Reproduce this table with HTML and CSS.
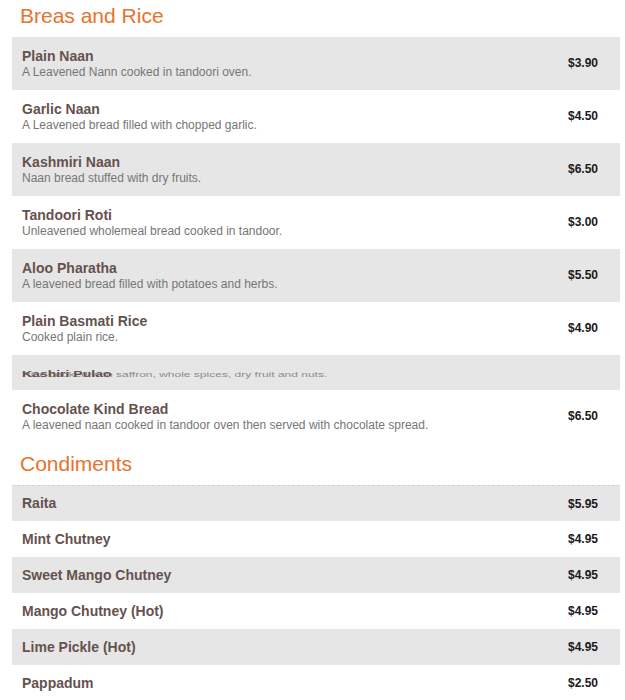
FILE: index.html
```html
<!DOCTYPE html>
<html>
<head>
<meta charset="utf-8">
<link rel="stylesheet" href="styles.css">
</head>
<body>
<div class="menu">
  <h2 class="heading first">Breas and Rice</h2>
  <div class="list">
    <div class="item alt">
      <div class="info"><div class="name">Plain Naan</div><div class="desc">A Leavened Nann cooked in tandoori oven.</div></div>
      <div class="price">$3.90</div>
    </div>
    <div class="item">
      <div class="info"><div class="name">Garlic Naan</div><div class="desc">A Leavened bread filled with chopped garlic.</div></div>
      <div class="price">$4.50</div>
    </div>
    <div class="item alt">
      <div class="info"><div class="name">Kashmiri Naan</div><div class="desc">Naan bread stuffed with dry fruits.</div></div>
      <div class="price">$6.50</div>
    </div>
    <div class="item">
      <div class="info"><div class="name">Tandoori Roti</div><div class="desc">Unleavened wholemeal bread cooked in tandoor.</div></div>
      <div class="price">$3.00</div>
    </div>
    <div class="item alt">
      <div class="info"><div class="name">Aloo Pharatha</div><div class="desc">A leavened bread filled with potatoes and herbs.</div></div>
      <div class="price">$5.50</div>
    </div>
    <div class="item">
      <div class="info"><div class="name">Plain Basmati Rice</div><div class="desc">Cooked plain rice.</div></div>
      <div class="price">$4.90</div>
    </div>
    <div class="item alt collapsing">
      <div class="stack"><div class="desc">Rice cooked with saffron, whole spices, dry fruit and nuts.</div><div class="name">Kashiri Pulao</div></div>
    </div>
    <div class="item">
      <div class="info"><div class="name">Chocolate Kind Bread</div><div class="desc">A leavened naan cooked in tandoor oven then served with chocolate spread.</div></div>
      <div class="price">$6.50</div>
    </div>
  </div>

  <h2 class="heading">Condiments</h2>
  <div class="list small">
    <div class="item alt dashed"><div class="info"><div class="name">Raita</div></div><div class="price">$5.95</div></div>
    <div class="item"><div class="info"><div class="name">Mint Chutney</div></div><div class="price">$4.95</div></div>
    <div class="item alt"><div class="info"><div class="name">Sweet Mango Chutney</div></div><div class="price">$4.95</div></div>
    <div class="item"><div class="info"><div class="name">Mango Chutney (Hot)</div></div><div class="price">$4.95</div></div>
    <div class="item alt"><div class="info"><div class="name">Lime Pickle (Hot)</div></div><div class="price">$4.95</div></div>
    <div class="item"><div class="info"><div class="name">Pappadum</div></div><div class="price">$2.50</div></div>
  </div>
</div>
</body>
</html>
```

FILE: styles.css
```css
html, body {
  margin: 0;
  padding: 0;
  background: #ffffff;
  font-family: "Liberation Sans", Arial, sans-serif;
  overflow: hidden;
}

.menu {
  margin: 0 5px 0 12px;
}

.heading {
  margin: 0;
  padding: 8px 0 8px 8px;
  font-size: 21px;
  line-height: 26px;
  font-weight: normal;
  color: #e8722c;
}

.heading.first {
  padding-top: 3px;
}

.list .item {
  display: grid;
  grid-template-columns: 1fr 52px;
  align-items: center;
  height: 53px;
  box-sizing: border-box;
  padding: 0 0 0 10px;
}

.list .item.alt {
  background: #e6e6e6;
}

.info {
  display: flex;
  flex-direction: column;
}

.name {
  font-size: 14px;
  line-height: 17px;
  font-weight: bold;
  color: #65524e;
}

.desc {
  font-size: 12px;
  line-height: 15px;
  color: #767676;
}

.price {
  font-size: 12px;
  font-weight: bold;
  color: #1a1a1a;
  padding-bottom: 2px;
}

.list .item.collapsing {
  height: 35px;
  display: flex;
}

.stack {
  display: grid;
  transform: scaleY(0.6);
  margin-top: 2px;
}

.stack > div {
  grid-area: 1 / 1;
  align-self: center;
}

.stack .desc {
  color: #8c8c8c;
  margin-top: 3px;
}

.list.small .item {
  height: 36px;
}

.list.small .price {
  padding-bottom: 0;
}

.item.dashed {
  border-top: 1px dashed #d4d4d4;
}
```
